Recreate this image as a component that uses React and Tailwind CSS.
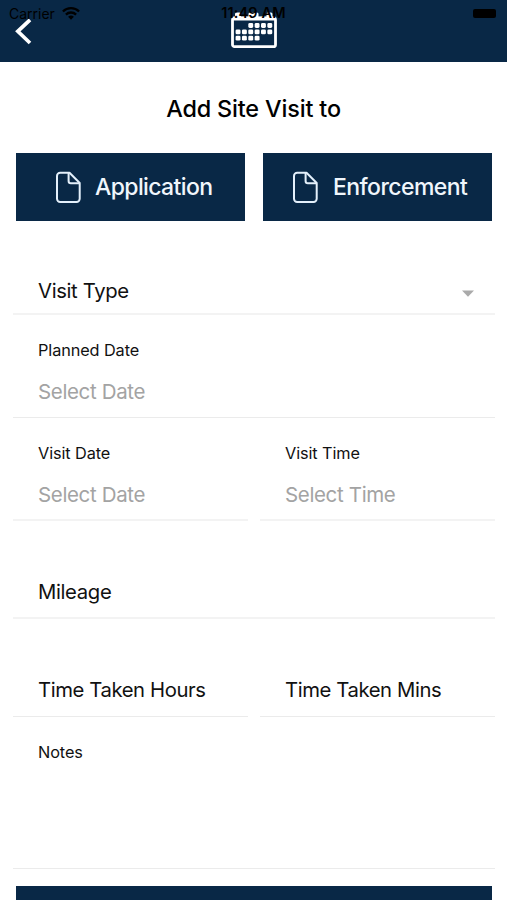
import React from "react";

function BackIcon() {
  return (
    <svg className="block" width="17" height="27" viewBox="0 0 17 27" fill="none" stroke="#fff" strokeWidth="3.7">
      <path d="M15 1.8 2.8 13.3 15 25" />
    </svg>
  );
}

function WifiIcon() {
  return (
    <svg className="block" width="18" height="13" viewBox="0 0 18 13" fill="none" stroke="#000" strokeWidth="2.3">
      <path d="M0.9 4.5a11.5 11.5 0 0 1 16.2 0" />
      <path d="M3.9 7.6a7.3 7.3 0 0 1 10.2 0" />
      <path d="M9 12.8 6.1 9.8a4.2 4.2 0 0 1 5.8 0z" fill="#000" stroke="none" />
    </svg>
  );
}

const DOTS = [
  [2, 0], [3, 0], [4, 0], [5, 0],
  [0, 1], [1, 1], [2, 1], [3, 1], [4, 1], [5, 1],
  [0, 2], [1, 2], [2, 2], [3, 2],
];

function CalendarIcon() {
  return (
    <svg className="block" width="46" height="37" viewBox="0 0 46 37">
      <rect x="1.5" y="6" width="43" height="28.7" rx="2" fill="none" stroke="#fff" strokeWidth="2.8" />
      <path d="M1.500 4.800h43v3.600h-43z" fill="#fff" />
      <rect x="4" y="0.500" width="6" height="5.500" rx="1.500" fill="#fff" />
      <rect x="17.500" y="0.500" width="10" height="5.500" rx="1.500" fill="#fff" />
      <rect x="35.500" y="0.500" width="6" height="5.500" rx="1.500" fill="#fff" />
      {DOTS.map(([c, r]) => (
        <rect key={`${c}-${r}`} x={4.6 + c * 6.35} y={11.1 + r * 6.3} width="4.9" height="4.9" rx="1.4" fill="#fff" />
      ))}
    </svg>
  );
}

function FileIcon() {
  return (
    <svg className="block shrink-0" width="25" height="32" viewBox="0 0 25 32" fill="none" stroke="#e4f0fb" strokeWidth="2" strokeLinejoin="round">
      <path d="M4.2 1.8h9.3L23.7 12v15.7a3.200 3.200 0 0 1-3.200 3.200H4.2A3.2 3.2 0 0 1 1 27.700V5a3.200 3.200 0 0 1 3.200-3.200z" />
      <path d="M12.600 2.100v7.900a2.200 2.200 0 0 0 2.200 2.200h8.600" />
    </svg>
  );
}

function Label({ children }) {
  return <div className="text-[16.3px] leading-5 tracking-[-0.1px]">{children}</div>;
}

function DateField({ label, placeholder, thin }) {
  return (
    <div className={`h-[103px] flex-1 pl-[25px] pt-[25px] ${thin ? "border-b border-[#ebebeb]" : "border-b-2 border-[#f3f3f3]"}`}>
      <Label>{label}</Label>
      <div className="mt-[18px] text-[20.5px] leading-7 tracking-[-0.35px] text-[#a3a3a3]">{placeholder}</div>
    </div>
  );
}

function LineField({ label, thin }) {
  return (
    <div className={`flex h-[42px] flex-1 items-start pl-[25px] pt-px ${thin ? "border-b border-[#ebebeb]" : "border-b-2 border-[#f3f3f3]"}`}>
      <div className={`whitespace-nowrap text-[20.3px] leading-7 ${thin ? "tracking-[-0.41px]" : "tracking-[-0.35px]"}`}>{label}</div>
    </div>
  );
}

export default function App() {
  return (
    <div className="h-[900px] w-full overflow-hidden bg-white font-['Inter',sans-serif] text-[#111]">
      <header className="relative h-[62px] bg-[#092846]">
        <div className="flex pl-[15px] pt-[18px]">
          <BackIcon />
        </div>
        <div className="absolute left-[231px] top-[12px]">
          <CalendarIcon />
        </div>
        <div className="absolute inset-x-0 top-[5px] grid h-[17px] grid-cols-3 items-center text-[14px] leading-none text-black">
          <div className="flex items-center gap-[7px] pl-[9px]">
            <span>Carrier</span>
            <WifiIcon />
          </div>
          <div className="whitespace-nowrap text-center text-[14.500px] font-semibold tracking-[0.15px]">11:49 AM</div>
          <div className="mr-[11px] h-[9px] w-[23px] justify-self-end rounded-[2px] bg-black" />
        </div>
      </header>

      <h1 className="mt-[31px] text-center text-[23.400px] font-[450] leading-8 text-black">
        <span className="tracking-[-0.15px]">Add Site Visit to</span>
      </h1>

      <div className="mt-7 flex gap-[18px] pl-4">
        <button className="flex h-[68px] w-[229px] items-center bg-[#092846] pl-10 text-[23px] font-medium text-[#f0f6fc]">
          <FileIcon />
          <span className="ml-[14px] pt-px tracking-[-0.62px]">Application</span>
        </button>
        <button className="flex h-[68px] w-[229px] items-center bg-[#092846] pl-[30px] text-[23px] font-medium text-[#f0f6fc]">
          <FileIcon />
          <span className="ml-[15px] pt-px tracking-[-0.58px]">Enforcement</span>
        </button>
      </div>

      <main className="ml-[13px] w-[482px]">
        <div className="flex pt-[55px]">
          <div className="flex h-[39px] flex-1 justify-between border-b-2 border-[#f3f3f3] pl-[25px] pr-[21px]">
            <div className="pt-px text-[20.3px] leading-7 tracking-[-0.35px]">Visit Type</div>
            <svg className="mt-[14px] block" width="12" height="7" viewBox="0 0 12 7">
              <path d="M0 .5h12L6 6.800z" fill="#aaa" />
            </svg>
          </div>
        </div>
        <div className="flex">
          <DateField label="Planned Date" placeholder="Select Date" thin />
        </div>
        <div className="flex gap-3">
          <DateField label="Visit Date" placeholder="Select Date" />
          <DateField label="Visit Time" placeholder="Select Time" />
        </div>
        <div className="flex pt-14">
          <LineField label="Mileage" />
        </div>
        <div className="flex gap-3 pt-14">
          <LineField label="Time Taken Hours" thin />
          <LineField label="Time Taken Mins" thin />
        </div>
        <div className="h-[152px] border-b border-[#ebebeb] pl-[25px] pt-[25px]">
          <Label>Notes</Label>
        </div>
      </main>
      <button className="ml-4 mt-[17px] block h-10 w-[476px] bg-[#092846]" />
    </div>
  );
}
